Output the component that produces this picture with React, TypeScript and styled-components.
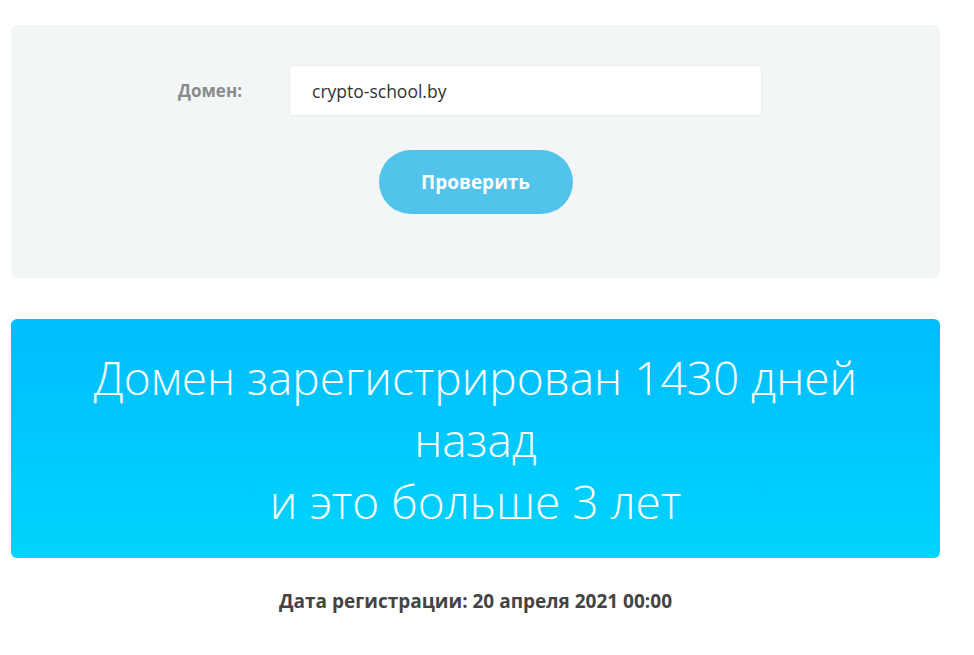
import React from "react";
import styled, { createGlobalStyle } from "styled-components";

const GlobalStyle = createGlobalStyle`
  html, body {
    margin: 0;
    padding: 0;
    background: #ffffff;
    font-family: "Open Sans", "Noto Sans", sans-serif;
  }
`;

const Page = styled.div`
  width: 929px;
  padding: 25px 0 0 11px;
`;

const FormCard = styled.div`
  background: #f3f6f7;
  border-radius: 6px;
  height: 253px;
  box-sizing: border-box;
  padding-top: 40px;
  display: flex;
  flex-direction: column;
  align-items: center;
`;

const FieldRow = styled.div`
  display: flex;
  align-items: center;
  margin-left: -11px;
`;

const Label = styled.label`
  width: 111px;
  font-size: 17px;
  font-weight: 700;
  color: #8a8a8a;
`;

const Input = styled.input`
  width: 473px;
  height: 51px;
  box-sizing: border-box;
  border: 1px solid #ebeef0;
  border-radius: 3px;
  background: #fff;
  padding: 0 22px;
  font-family: "Open Sans", sans-serif;
  font-size: 17.5px;
  color: #333;
  outline: none;
`;

const CheckButton = styled.button`
  margin-top: 34px;
  width: 194px;
  height: 64px;
  border: none;
  border-radius: 32px;
  background: #52c3ea;
  color: #fff;
  font-family: "Open Sans", sans-serif;
  font-size: 19px;
  font-weight: 700;
  cursor: pointer;
`;

const ResultBox = styled.div`
  margin-top: 41px;
  height: 239px;
  border-radius: 6px;
  background: linear-gradient(180deg, #00bdfd 0%, #00d4fd 100%);
  display: flex;
  align-items: center;
  justify-content: center;
  text-align: center;
`;

const ResultText = styled.div`
  color: #fff;
  font-size: 46px;
  font-weight: 300;
  line-height: 62px;
  max-width: 800px;
`;

const RegDate = styled.div`
  margin-top: 30px;
  text-align: center;
  font-size: 19px;
  font-weight: 700;
  color: #444;
`;

export default function App() {
  return (
    <>
      <GlobalStyle />
      <Page>
        <FormCard>
          <FieldRow>
            <Label>Домен:</Label>
            <Input defaultValue="crypto-school.by" />
          </FieldRow>
          <CheckButton>Проверить</CheckButton>
        </FormCard>
        <ResultBox>
          <ResultText>
            Домен зарегистрирован 1430 дней назад
            <br />и это больше 3 лет
          </ResultText>
        </ResultBox>
        <RegDate>Дата регистрации: 20 апреля 2021 00:00</RegDate>
      </Page>
    </>
  );
}
